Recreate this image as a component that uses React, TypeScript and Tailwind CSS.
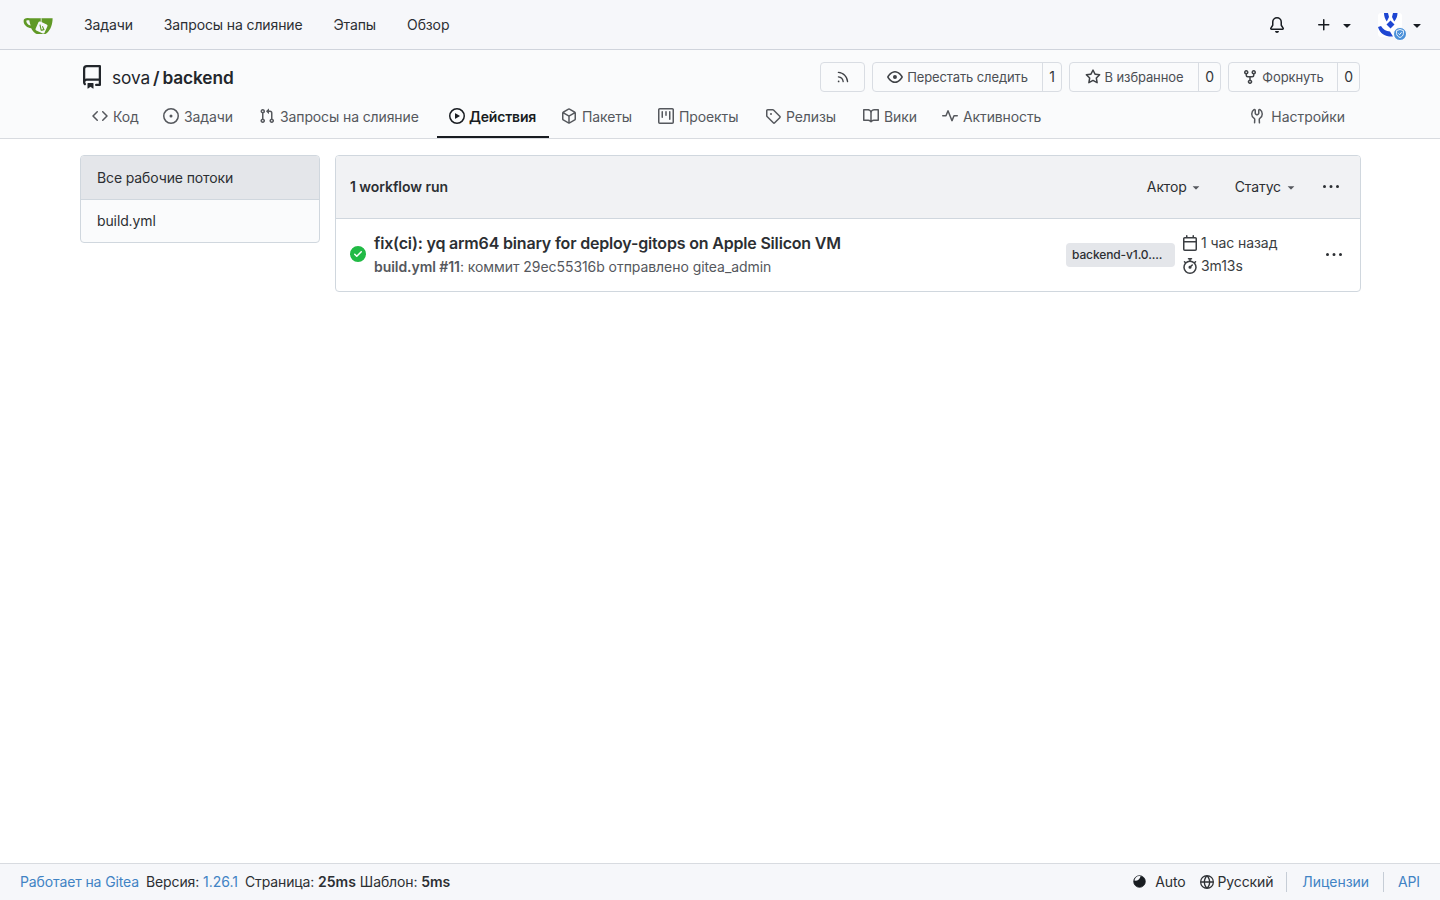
import React from 'react';

// octicons, 16px grid
const I = {
  repo: 'M2 2.5A2.5 2.5 0 0 1 4.5 0h8.75a.75.75 0 0 1 .75.75v12.5a.75.75 0 0 1-.75.75h-2.5a.75.75 0 0 1 0-1.5h1.75v-2h-8a1 1 0 0 0-.714 1.7.75.75 0 1 1-1.072 1.05A2.495 2.495 0 0 1 2 11.5Zm10.5-1h-8a1 1 0 0 0-1 1v6.708A2.486 2.486 0 0 1 4.5 9h8ZM5 12.25a.25.25 0 0 1 .25-.25h3.5a.25.25 0 0 1 .25.25v3.25a.25.25 0 0 1-.4.2l-1.45-1.087a.249.249 0 0 0-.3 0L5.4 15.7a.25.25 0 0 1-.4-.2Z',
  code: 'm11.28 3.22 4.25 4.25a.75.75 0 0 1 0 1.06l-4.25 4.25a.749.749 0 0 1-1.275-.326.749.749 0 0 1 .215-.734L13.94 8l-3.72-3.72a.749.749 0 0 1 .326-1.275.749.749 0 0 1 .734.215Zm-6.56 0a.751.751 0 0 1 1.042.018.751.751 0 0 1 .018 1.042L2.06 8l3.72 3.72a.749.749 0 0 1-.326 1.275.749.749 0 0 1-.734-.215L.47 8.53a.75.75 0 0 1 0-1.06Z',
  issue: 'M8 9.5a1.5 1.5 0 1 0 0-3 1.5 1.5 0 0 0 0 3ZM8 0a8 8 0 1 1 0 16A8 8 0 0 1 8 0ZM1.5 8a6.5 6.5 0 1 0 13 0 6.5 6.5 0 0 0-13 0Z',
  pull: 'M1.5 3.25a2.25 2.25 0 1 1 3 2.122v5.256a2.251 2.251 0 1 1-1.5 0V5.372A2.25 2.25 0 0 1 1.5 3.25Zm5.677-.177L9.573.677A.25.25 0 0 1 10 .854V2.5h1A2.5 2.5 0 0 1 13.5 5v5.628a2.251 2.251 0 1 1-1.5 0V5a1 1 0 0 0-1-1h-1v1.646a.25.25 0 0 1-.427.177L7.177 3.427a.25.25 0 0 1 0-.354ZM3.75 2.5a.75.75 0 1 0 0 1.5.75.75 0 0 0 0-1.5Zm0 9.5a.75.75 0 1 0 0 1.5.75.75 0 0 0 0-1.5Zm8.25.75a.75.75 0 1 0 1.5 0 .75.75 0 0 0-1.5 0Z',
  play: 'M8 0a8 8 0 1 1 0 16A8 8 0 0 1 8 0ZM1.5 8a6.5 6.5 0 1 0 13 0 6.5 6.5 0 0 0-13 0Zm4.879-2.773 4.264 2.559a.25.25 0 0 1 0 .428l-4.264 2.559A.25.25 0 0 1 6 10.559V5.442a.25.25 0 0 1 .379-.215Z',
  pkg: 'm8.878.392 5.25 3.045c.54.314.872.89.872 1.514v6.098a1.75 1.75 0 0 1-.872 1.514l-5.25 3.045a1.75 1.75 0 0 1-1.756 0l-5.25-3.045A1.75 1.75 0 0 1 1 11.049V4.951c0-.624.332-1.201.872-1.514L7.122.392a1.75 1.75 0 0 1 1.756 0ZM7.875 1.69l-4.63 2.685L8 7.133l4.755-2.758-4.63-2.685a.248.248 0 0 0-.25 0ZM2.5 5.677v5.372c0 .09.047.171.125.216l4.625 2.683V8.432Zm6.25 8.271 4.625-2.683a.25.25 0 0 0 .125-.216V5.677L8.75 8.432Z',
  project: 'M1.75 0h12.5C15.216 0 16 .784 16 1.75v12.5A1.75 1.75 0 0 1 14.25 16H1.75A1.75 1.75 0 0 1 0 14.25V1.75C0 .784.784 0 1.75 0ZM1.5 1.75v12.5c0 .138.112.25.25.25h12.5a.25.25 0 0 0 .25-.25V1.75a.25.25 0 0 0-.25-.25H1.75a.25.25 0 0 0-.25.25ZM11.75 3a.75.75 0 0 1 .75.75v7.5a.75.75 0 0 1-1.5 0v-7.5a.75.75 0 0 1 .75-.75Zm-8.25.75a.75.75 0 0 1 1.5 0v5.5a.75.75 0 0 1-1.5 0ZM8 3a.75.75 0 0 1 .75.75v3.5a.75.75 0 0 1-1.5 0v-3.5A.75.75 0 0 1 8 3Z',
  tag: 'M1 7.775V2.75C1 1.784 1.784 1 2.75 1h5.025c.464 0 .91.184 1.238.513l6.25 6.25a1.75 1.75 0 0 1 0 2.474l-5.026 5.026a1.75 1.75 0 0 1-2.474 0l-6.25-6.25A1.752 1.752 0 0 1 1 7.775Zm1.5 0c0 .066.026.13.073.177l6.25 6.25a.25.25 0 0 0 .354 0l5.025-5.025a.25.25 0 0 0 0-.354l-6.25-6.25a.25.25 0 0 0-.177-.073H2.75a.25.25 0 0 0-.25.25ZM6 5a1 1 0 1 1 0 2 1 1 0 0 1 0-2Z',
  book: 'M0 1.75A.75.75 0 0 1 .75 1h4.253c1.227 0 2.317.59 3 1.501A3.743 3.743 0 0 1 11.006 1h4.245a.75.75 0 0 1 .75.75v10.5a.75.75 0 0 1-.75.75h-4.507a2.25 2.25 0 0 0-1.591.659l-.622.621a.75.75 0 0 1-1.06 0l-.622-.621A2.25 2.25 0 0 0 5.258 13H.75a.75.75 0 0 1-.75-.75Zm7.251 10.324.004-5.073-.002-2.253A2.25 2.25 0 0 0 5.003 2.5H1.5v9h3.757a3.75 3.75 0 0 1 1.994.574ZM8.755 4.75l-.004 7.322a3.752 3.752 0 0 1 1.992-.572H14.5v-9h-3.495a2.25 2.25 0 0 0-2.25 2.25Z',
  pulse: 'M6 2c.306 0 .582.187.696.471L10 10.731l1.304-3.26A.751.751 0 0 1 12 7h3.25a.75.75 0 0 1 0 1.5h-2.742l-1.812 4.528a.751.751 0 0 1-1.392 0L6 4.77 4.696 8.03A.75.75 0 0 1 4 8.5H.75a.75.75 0 0 1 0-1.5h2.742l1.812-4.529A.751.751 0 0 1 6 2Z',
  tools: 'M5.433 2.304A4.492 4.492 0 0 0 3.5 6c0 1.598.832 3.002 2.09 3.802.518.328.929.923.902 1.64v.008l-.164 3.337a.75.75 0 1 1-1.498-.073l.163-3.33c.002-.085-.05-.216-.207-.316A5.996 5.996 0 0 1 2 6a5.993 5.993 0 0 1 2.567-4.92 1.482 1.482 0 0 1 1.673-.04c.462.296.76.827.76 1.423v2.82c0 .082.041.16.11.206l.75.51a.25.25 0 0 0 .28 0l.75-.51A.249.249 0 0 0 9 5.282V2.463c0-.596.298-1.127.76-1.423a1.482 1.482 0 0 1 1.673.04A5.993 5.993 0 0 1 14 6a5.996 5.996 0 0 1-2.786 5.068c-.157.1-.209.23-.207.315l.163 3.33a.752.752 0 0 1-1.094.714.75.75 0 0 1-.404-.64l-.164-3.345c-.027-.717.384-1.312.902-1.64A4.495 4.495 0 0 0 12.5 6a4.492 4.492 0 0 0-1.933-3.696c-.024.017-.067.067-.067.16v2.818a1.75 1.75 0 0 1-.767 1.448l-.75.51a1.75 1.75 0 0 1-1.966 0l-.75-.51A1.75 1.75 0 0 1 5.5 5.282V2.463c0-.092-.043-.142-.067-.159Z',
  rss: 'M2.002 2.725a.75.75 0 0 1 .797-.699C8.79 2.42 13.58 7.21 13.974 13.201a.75.75 0 0 1-1.497.098 10.502 10.502 0 0 0-9.776-9.776.747.747 0 0 1-.7-.798ZM2.84 7.05h-.002a7.002 7.002 0 0 1 6.113 6.111.75.75 0 0 1-1.49.178 5.503 5.503 0 0 0-4.8-4.8.75.75 0 0 1 .179-1.489ZM2 13a1 1 0 1 1 2 0 1 1 0 0 1-2 0Z',
  eye: 'M8 2c1.981 0 3.671.992 4.933 2.078 1.27 1.091 2.187 2.345 2.637 3.023a1.62 1.62 0 0 1 0 1.798c-.45.678-1.367 1.932-2.637 3.023C11.67 13.008 9.981 14 8 14c-1.981 0-3.671-.992-4.933-2.078C1.797 10.83.88 9.576.43 8.898a1.62 1.62 0 0 1 0-1.798c.45-.677 1.367-1.931 2.637-3.022C4.33 2.992 6.019 2 8 2ZM1.679 7.932a.12.12 0 0 0 0 .136c.411.622 1.241 1.75 2.366 2.717C5.176 11.758 6.527 12.5 8 12.5c1.473 0 2.825-.742 3.955-1.715 1.124-.967 1.954-2.096 2.366-2.717a.12.12 0 0 0 0-.136c-.412-.621-1.242-1.75-2.366-2.717C10.824 4.242 9.473 3.5 8 3.5c-1.473 0-2.825.742-3.955 1.715-1.124.967-1.954 2.096-2.366 2.717ZM8 10a2 2 0 1 1-.001-3.999A2 2 0 0 1 8 10Z',
  star: 'M8 .25a.75.75 0 0 1 .673.418l1.882 3.815 4.21.612a.75.75 0 0 1 .416 1.279l-3.046 2.97.719 4.192a.751.751 0 0 1-1.088.791L8 12.347l-3.766 1.98a.75.75 0 0 1-1.088-.79l.72-4.194L.818 6.374a.75.75 0 0 1 .416-1.28l4.21-.611L7.327.668A.75.75 0 0 1 8 .25Zm0 2.445L6.615 5.5a.75.75 0 0 1-.564.41l-3.097.45 2.24 2.184a.75.75 0 0 1 .216.664l-.528 3.084 2.769-1.456a.75.75 0 0 1 .698 0l2.77 1.456-.53-3.084a.75.75 0 0 1 .216-.664l2.24-2.183-3.096-.45a.75.75 0 0 1-.564-.41L8 2.694Z',
  fork: 'M5 5.372v.878c0 .414.336.75.75.75h4.5a.75.75 0 0 0 .75-.75v-.878a2.25 2.25 0 1 1 1.5 0v.878a2.25 2.25 0 0 1-2.25 2.25h-1.5v2.128a2.251 2.251 0 1 1-1.5 0V8.5h-1.5A2.25 2.25 0 0 1 3.5 6.25v-.878a2.25 2.25 0 1 1 1.5 0ZM5 3.25a.75.75 0 1 0-1.5 0 .75.75 0 0 0 1.5 0Zm6.75.75a.75.75 0 1 0 0-1.5.75.75 0 0 0 0 1.5Zm-3 8.75a.75.75 0 1 0-1.5 0 .75.75 0 0 0 1.5 0Z',
  bell: 'M8 16a2 2 0 0 0 1.985-1.75c.017-.137-.097-.25-.235-.25h-3.5c-.138 0-.252.113-.235.25A2 2 0 0 0 8 16ZM3 5a5 5 0 0 1 10 0v2.947c0 .05.015.098.042.139l1.703 2.555A1.519 1.519 0 0 1 13.482 13H2.518a1.516 1.516 0 0 1-1.263-2.36l1.703-2.554A.255.255 0 0 0 3 7.947Zm5-3.5A3.5 3.5 0 0 0 4.5 5v2.947c0 .346-.102.683-.294.97l-1.703 2.556a.017.017 0 0 0-.003.01l.001.006c0 .002.002.004.004.006l.006.004.007.001h10.964l.007-.001.006-.004.004-.006.001-.007a.017.017 0 0 0-.003-.01l-1.703-2.554a1.745 1.745 0 0 1-.294-.97V5A3.5 3.5 0 0 0 8 1.5Z',
  plus: 'M7.75 2a.75.75 0 0 1 .75.75V7h4.25a.75.75 0 0 1 0 1.5H8.5v4.25a.75.75 0 0 1-1.5 0V8.5H2.75a.75.75 0 0 1 0-1.5H7V2.75A.75.75 0 0 1 7.75 2Z',
  caret: 'm4.427 7.427 3.396 3.396a.25.25 0 0 0 .354 0l3.396-3.396A.25.25 0 0 0 11.396 7H4.604a.25.25 0 0 0-.177.427Z',
  kebab: 'M8 9a1.5 1.5 0 1 0 0-3 1.5 1.5 0 0 0 0 3ZM1.5 9a1.5 1.5 0 1 0 0-3 1.5 1.5 0 0 0 0 3Zm13 0a1.5 1.5 0 1 0 0-3 1.5 1.5 0 0 0 0 3Z',
  calendar: 'M4.75 0a.75.75 0 0 1 .75.75V2h5V.75a.75.75 0 0 1 1.5 0V2h1.25c.966 0 1.75.784 1.75 1.75v10.5A1.75 1.75 0 0 1 13.25 16H2.75A1.75 1.75 0 0 1 1 14.25V3.75C1 2.784 1.784 2 2.75 2H4V.75A.75.75 0 0 1 4.75 0ZM2.5 7.5v6.75c0 .138.112.25.25.25h10.5a.25.25 0 0 0 .25-.25V7.5Zm10.75-4H2.75a.25.25 0 0 0-.25.25V6h11V3.75a.25.25 0 0 0-.25-.25Z',
  stopwatch: 'M5.75.75A.75.75 0 0 1 6.5 0h3a.75.75 0 0 1 0 1.5h-.75v1l-.001.041a6.724 6.724 0 0 1 3.464 1.435l.007-.006.75-.75a.749.749 0 0 1 1.275.326.749.749 0 0 1-.215.734l-.75.75-.006.007a6.75 6.75 0 1 1-10.548 0L2.72 5.03l-.75-.75a.751.751 0 0 1 .018-1.042.751.751 0 0 1 1.042-.018l.75.75.007.006A6.72 6.72 0 0 1 7.25 2.541V1.5H6.5a.75.75 0 0 1-.75-.75ZM8 14.5a5.25 5.25 0 1 0-.001-10.501A5.25 5.25 0 0 0 8 14.5Zm.389-6.7 1.33-1.33a.75.75 0 1 1 1.061 1.06L9.45 8.861A1.503 1.503 0 0 1 8 10.75a1.499 1.499 0 1 1 .389-2.95Z',
  globe: 'M8 0a8 8 0 1 1 0 16A8 8 0 0 1 8 0ZM5.78 8.75a9.64 9.64 0 0 0 1.363 4.177c.255.426.542.832.857 1.215.245-.296.551-.705.857-1.215A9.64 9.64 0 0 0 10.22 8.75Zm4.44-1.5a9.64 9.64 0 0 0-1.363-4.177c-.307-.51-.612-.919-.857-1.215a9.927 9.927 0 0 0-.857 1.215A9.64 9.64 0 0 0 5.78 7.25Zm-5.944 1.5H1.543a6.507 6.507 0 0 0 4.666 5.5c-.123-.181-.24-.365-.352-.552-.715-1.192-1.437-2.874-1.581-4.948Zm-2.733-1.5h2.733c.144-2.074.866-3.756 1.58-4.948.12-.197.237-.381.353-.552a6.507 6.507 0 0 0-4.666 5.5Zm10.181 1.5c-.144 2.074-.866 3.756-1.58 4.948-.12.197-.237.381-.353.552a6.507 6.507 0 0 0 4.666-5.5Zm2.733-1.5a6.507 6.507 0 0 0-4.666-5.5c.123.181.24.365.353.552.714 1.192 1.436 2.874 1.58 4.948Z',
  check: 'M8 16A8 8 0 1 1 8 0a8 8 0 0 1 0 16Zm3.78-9.72a.751.751 0 0 0-.018-1.042.751.751 0 0 0-1.042-.018L6.75 9.19 5.28 7.72a.751.751 0 0 0-1.042.018.751.751 0 0 0-.018 1.042l2 2a.75.75 0 0 0 1.06 0Z',
};

const Oct = ({ d, size = 16, className = '' }: { d: string; size?: number; className?: string }) => (
  <svg width={size} height={size} viewBox="0 0 16 16" fill="currentColor" className={`shrink-0 ${className}`}>
    <path d={d} />
  </svg>
);

const tabs = [
  { label: 'Код', icon: I.code, w: 'w-[71px]' },
  { label: 'Задачи', icon: I.issue, w: 'w-[96px]' },
  { label: 'Запросы на слияние', icon: I.pull, w: 'w-[190px]' },
  { label: 'Действия', icon: I.play, w: 'w-[112px]', active: true },
  { label: 'Пакеты', icon: I.pkg, w: 'w-[97px]' },
  { label: 'Проекты', icon: I.project, w: 'w-[107px]' },
  { label: 'Релизы', icon: I.tag, w: 'w-[98px]' },
  { label: 'Вики', icon: I.book, w: 'w-[79px]' },
  { label: 'Активность', icon: I.pulse, w: 'w-[120px]' },
];

const TeaLogo = () => (
  <svg width="30" height="20" viewBox="0 0 30 20">
    <path d="M7 3.2 H29.6 C29.6 9 27.6 15 23.6 18.2 C22.8 18.9 21.8 19 21 19 H15 C11.5 19 9.5 15.5 8.2 13.2 C4.5 12.8 0.6 10.4 0.6 6 C0.6 3.8 2.4 3 4.5 3 Z" fill="#609926" />
    <path d="M3.4 5.4 C5 5.2 6 5.2 6.4 5.4 C6.6 7.4 7.2 9 7.8 10.4 C5.4 10 3 8 3.4 5.4 Z" fill="#f6f7fa" />
    <path d="M18.2 3.2 V8" stroke="#f6f7fa" strokeWidth="0.8" />
    <rect x="13.6" y="7.6" width="9.8" height="9.8" rx="1.4" transform="rotate(24 18.5 12.5)" fill="#f6f7fa" />
    <path d="M17 9.6 L18.2 15.4 M19.4 11.2 L20.9 14.6 L18.2 15.4" stroke="#609926" strokeWidth="1.1" fill="none" />
  </svg>
);

const Avatar = () => (
  <span className="relative block w-6 h-6 bg-white rounded-[3px]">
    <svg width="24" height="24" viewBox="0 0 24 24" className="block">
      <path d="M6 0 H10 L11 4 L8.8 8.5 C7 6 6 3 6 0 Z M19.5 0 H15 L14 4 L16.2 8.5 C18.5 6 19.5 3 19.5 0 Z" fill="#1e46d2" />
      <path d="M12.5 7.5 L16.5 11.5 L12.5 15.5 L8.5 11.5 Z" fill="#1e46d2" />
      <path d="M0 14 L3 13 C5 16.5 8 18 12 18.5 L15 23.5 C8 24 2 21 0 14 Z" fill="#1e46d2" />
    </svg>
    <span className="absolute left-[15px] top-[14px] w-[14px] h-[14px] rounded-full bg-[#4a90d9] border border-white flex items-center justify-center">
      <svg width="8" height="9" viewBox="0 0 8 9">
        <path d="M4 0.5 L7.4 1.6 V4.5 C7.4 6.4 5.8 7.8 4 8.5 C2.2 7.8 0.6 6.4 0.6 4.5 V1.6 Z" fill="none" stroke="#fff" strokeWidth="0.9" />
        <path d="M2.4 4.4 L3.6 5.6 L5.6 3.2" fill="none" stroke="#fff" strokeWidth="0.9" />
      </svg>
    </span>
  </span>
);

const RepoButton = ({ icon, label, count, w, cw }: { icon: string; label: string; count: string; w: string; cw: string }) => (
  <div className="flex h-[30px] border border-[#d9dde3] rounded-[4px] bg-[#fafbfc] text-[13px] text-[#4c4f54]">
    <span className={`${w} flex items-center justify-center gap-1 border-r border-[#d9dde3]`}>
      <Oct d={icon} className="text-[#3f4246]" /> <span className="pt-[1px]">{label}</span>
    </span>
    <span className={`${cw} flex items-center justify-center text-[14px] text-[#33363a] pb-[1px]`}>{count}</span>
  </div>
);

export default function App() {
  return (
    <div className="min-h-[900px] flex flex-col bg-white text-[14px] tracking-[-0.12px] text-[#181c21] font-['Inter','Noto_Sans',sans-serif]">
      {/* top navbar */}
      <nav className="h-[50px] flex items-center pl-[23px] pr-[15px] bg-[#f6f7fa] border-b border-[#d0d4dc]">
        <TeaLogo />
        <div className="flex ml-[31px] gap-[31px] text-[#2c2f33]">
          <span>Задачи</span>
          <span>Запросы на слияние</span>
          <span>Этапы</span>
          <span>Обзор</span>
        </div>
        <div className="ml-auto flex items-center text-[#181c21]">
          <Oct d={I.bell} />
          <Oct d={I.plus} className="ml-[31px]" />
          <Oct d={I.caret} className="ml-[7px]" />
          <span className="ml-[23px]"><Avatar /></span>
          <Oct d={I.caret} className="ml-[7px]" />
        </div>
      </nav>

      {/* repo header */}
      <div className="h-[89px] bg-[#fafbfc] border-b border-[#d8dbe0]">
        <div className="mx-[80px] h-[48px] pt-[6px] flex items-center">
          <Oct d={I.repo} size={24} className="text-[#22262b]" />
          <span className="ml-[8px] mt-[2px] text-[17.3px] text-[#22262b]">sova</span>
          <span className="mx-[3px] mt-[2px] text-[17.3px] font-semibold text-[#22262b]">/</span>
          <span className="mt-[2px] text-[17.3px] font-semibold text-[#22262b]">backend</span>
          <div className="ml-auto flex gap-[7px]">
            <span className="w-[45px] h-[30px] border border-[#d9dde3] rounded-[4px] flex items-center justify-center text-[#3f4246]">
              <Oct d={I.rss} size={14} />
            </span>
            <RepoButton icon={I.eye} label="Перестать следить" count="1" w="w-[170px]" cw="w-[18px]" />
            <RepoButton icon={I.star} label="В избранное" count="0" w="w-[129px]" cw="w-[21px]" />
            <RepoButton icon={I.fork} label="Форкнуть" count="0" w="w-[109px]" cw="w-[21px]" />
          </div>
        </div>
        <div className="mx-[80px] flex h-[40px] text-[#55585d]">
          {tabs.map((t) => (
            <span
              key={t.label}
              className={`${t.w} h-[40px] flex items-center pl-[12px] ${t.active ? 'gap-[4px] pb-[2px] border-b-2 border-[#181c21] text-[#181c21] font-semibold tracking-[-0.18px]' : 'gap-[5px] pb-[4px]'}`}
            >
              <Oct d={t.icon} className={t.active ? 'text-[#181c21]' : 'text-[#55585d]'} />
              {t.label}
            </span>
          ))}
          <span className="ml-auto mr-[15px] pb-[4px] flex items-center gap-[6px] tracking-[-0.05px]">
            <Oct d={I.tools} /> Настройки
          </span>
        </div>
      </div>

      {/* content */}
      <main className="flex-1 flex items-start mt-[16px] ml-[80px] mr-[79px] gap-[15px]">
        <div className="w-[240px] border border-[#d0d7de] rounded-[4px] overflow-hidden bg-[#fafbfc]">
          <div className="h-[44px] flex items-center px-4 bg-[#e4e6ea] border-b border-[#d0d7de] text-[#2c2f33]">Все рабочие потоки</div>
          <div className="h-[42px] flex items-center px-4 pb-[1px] text-[#2c2f33]">build.yml</div>
        </div>
        <div className="flex-1 border border-[#d0d7de] rounded-[4px] overflow-hidden">
          <div className="h-[63px] flex items-center pl-[14px] pr-[21px] pb-[1px] bg-[#f1f2f4] border-b border-[#d0d7de]">
            <span className="font-semibold text-[#2c2f33] tracking-[-0.05px]">1 workflow run</span>
            <span className="ml-auto flex items-center gap-[2px] text-[#2c2f33]">Актор <Oct d={I.caret} size={14} className="text-[#55585d]" /></span>
            <span className="ml-[32px] flex items-center gap-[3px] text-[#2c2f33]">Статус <Oct d={I.caret} size={14} className="text-[#55585d]" /></span>
            <Oct d={I.kebab} className="ml-[25px] text-[#2c2f33]" />
          </div>
          <div className="h-[72px] flex items-center pl-[14px] pr-[18px]">
            <Oct d={I.check} className="text-[#21ba45] mb-[2px]" />
            <div className="ml-[8px] flex-1 min-w-0">
              <div className="text-[16px] leading-[20px] font-semibold text-[#2c2f33] tracking-[-0.18px]">fix(ci): yq arm64 binary for deploy-gitops on Apple Silicon VM</div>
              <div className="mt-[4px] leading-[20px] text-[#55585d] tracking-[-0.06px]"><span className="font-semibold">build.yml #11</span>: коммит 29ec55316b отправлено gitea_admin</div>
            </div>
            <span className="w-[109px] h-[24px] flex items-center px-[6px] rounded-[4px] bg-[#e4e6ea] text-[12px] font-medium text-[#2c2f33] whitespace-nowrap overflow-hidden">backend-v1.0....</span>
            <div className="ml-[7px] w-[144px] pb-[2px] text-[#3b3e42] tracking-[-0.08px]">
              <div className="flex items-center gap-[3px] h-[23px]"><Oct d={I.calendar} /> 1 час назад</div>
              <div className="flex items-center gap-[3px] h-[23px]"><Oct d={I.stopwatch} /> 3m13s</div>
            </div>
            <Oct d={I.kebab} className="text-[#2c2f33]" />
          </div>
        </div>
      </main>

      {/* footer */}
      <footer className="h-[37px] flex items-center pl-[20px] pr-[20px] pb-[1px] bg-[#f6f7fa] border-t border-[#d8dbe0] text-[#2c2f33]">
        <span className="text-[#4183c4]">Работает на Gitea</span>
        <span className="ml-[7px]">Версия: <span className="text-[#4183c4] tracking-normal">1.26.1</span></span>
        <span className="ml-[7px]">Страница: <b className="font-semibold tracking-normal">25ms</b></span>
        <span className="ml-[4px]">Шаблон: <b className="font-semibold tracking-normal">5ms</b></span>
        <div className="ml-auto flex items-center">
          <svg width="13" height="13" viewBox="0 0 13 13">
            <circle cx="6.5" cy="6.5" r="5.8" fill="#181c21" stroke="#181c21" strokeWidth="0.8" />
            <path d="M1.4 5.6 C4.4 6.2 7 4 7.6 1.2 C4.4 0.4 2 2.4 1.4 5.6 Z" fill="#f6f7fa" />
          </svg>
          <span className="ml-[9px]">Auto</span>
          <Oct d={I.globe} size={14} className="ml-[14px]" />
          <span className="ml-[4px]">Русский</span>
          <span className="ml-[13px] h-[20px] border-l border-[#c6cdd6]" />
          <span className="ml-[15px] text-[#4183c4] tracking-[-0.05px]">Лицензии</span>
          <span className="ml-[14px] h-[20px] border-l border-[#c6cdd6]" />
          <span className="ml-[14px] text-[#4183c4]">API</span>
        </div>
      </footer>
    </div>
  );
}
